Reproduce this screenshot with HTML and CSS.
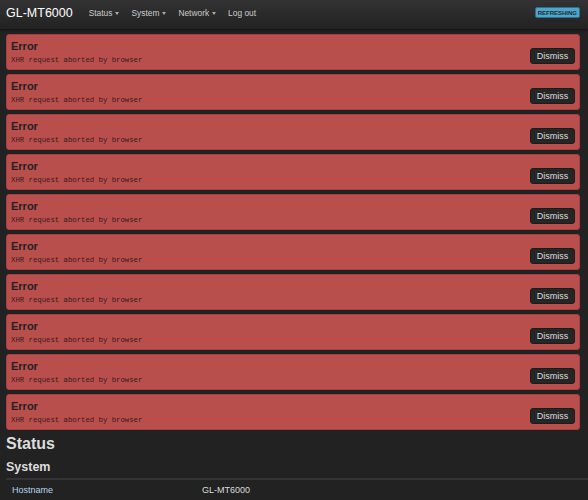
FILE: index.html
```html
<!DOCTYPE html>
<html lang="en">

<head>
    <meta charset="UTF-8">
    <meta name="viewport" content="width=device-width, initial-scale=1.0">
    <title>GL-MT6000 - Status - LuCI</title>
    <link rel="stylesheet" href="styles.css">
</head>

<body>
    <header class="navbar">
        <a class="brand" href="#">GL-MT6000</a>
        <ul class="nav">
            <li><a class="menu" href="#">Status</a></li>
            <li><a class="menu" href="#">System</a></li>
            <li><a class="menu" href="#">Network</a></li>
            <li><a href="#">Log out</a></li>
        </ul>
        <span class="label-refresh">REFRESHING</span>
    </header>

    <div class="main">
        <div class="alerts">
            <div class="alert-error">
                <div class="alert-text">
                    <h4>Error</h4>
                    <pre>XHR request aborted by browser</pre>
                </div>
                <button class="btn">Dismiss</button>
            </div>
            <div class="alert-error">
                <div class="alert-text">
                    <h4>Error</h4>
                    <pre>XHR request aborted by browser</pre>
                </div>
                <button class="btn">Dismiss</button>
            </div>
            <div class="alert-error">
                <div class="alert-text">
                    <h4>Error</h4>
                    <pre>XHR request aborted by browser</pre>
                </div>
                <button class="btn">Dismiss</button>
            </div>
            <div class="alert-error">
                <div class="alert-text">
                    <h4>Error</h4>
                    <pre>XHR request aborted by browser</pre>
                </div>
                <button class="btn">Dismiss</button>
            </div>
            <div class="alert-error">
                <div class="alert-text">
                    <h4>Error</h4>
                    <pre>XHR request aborted by browser</pre>
                </div>
                <button class="btn">Dismiss</button>
            </div>
            <div class="alert-error">
                <div class="alert-text">
                    <h4>Error</h4>
                    <pre>XHR request aborted by browser</pre>
                </div>
                <button class="btn">Dismiss</button>
            </div>
            <div class="alert-error">
                <div class="alert-text">
                    <h4>Error</h4>
                    <pre>XHR request aborted by browser</pre>
                </div>
                <button class="btn">Dismiss</button>
            </div>
            <div class="alert-error">
                <div class="alert-text">
                    <h4>Error</h4>
                    <pre>XHR request aborted by browser</pre>
                </div>
                <button class="btn">Dismiss</button>
            </div>
            <div class="alert-error">
                <div class="alert-text">
                    <h4>Error</h4>
                    <pre>XHR request aborted by browser</pre>
                </div>
                <button class="btn">Dismiss</button>
            </div>
            <div class="alert-error">
                <div class="alert-text">
                    <h4>Error</h4>
                    <pre>XHR request aborted by browser</pre>
                </div>
                <button class="btn">Dismiss</button>
            </div>
        </div>

        <h2 class="page-title">Status</h2>
        <div class="cbi-section">
            <h3>System</h3>
            <table class="table">
                <tr>
                    <td class="td-left">Hostname</td>
                    <td>GL-MT6000</td>
                </tr>
            </table>
        </div>
    </div>
</body>

</html>
```

FILE: styles.css
```css
body {
    margin: 0;
    background-color: #222;
    color: #ddd;
    font-family: "Liberation Sans", Arial, sans-serif;
    font-size: 9px;
}

/* top bar */
.navbar {
    display: flex;
    align-items: center;
    height: 25px;
    padding: 0 8px 4px 6px;
    background: linear-gradient(#333, #222);
    box-shadow: 0 1px 2px rgba(0, 0, 0, 0.5);
}

.brand {
    color: #fff;
    font-size: 12.5px;
    text-decoration: none;
    margin-right: 10px;
}

.nav {
    display: flex;
    list-style: none;
    margin: 0;
    padding: 0;
    flex: 1;
}

.nav a {
    display: block;
    color: #ccc;
    text-decoration: none;
    padding: 0 6px;
    font-size: 8.4px;
}

.nav a.menu::after {
    content: "";
    display: inline-block;
    margin-left: 3px;
    vertical-align: middle;
    border-top: 3px solid #aaa;
    border-left: 2.5px solid transparent;
    border-right: 2.5px solid transparent;
}

.label-refresh {
    background-color: #4fa6cb;
    color: #1c2b33;
    font-size: 6px;
    font-weight: bold;
    padding: 1.5px 2px;
    border-radius: 2px;
    border: 1px solid #2e6f8c;
}

.main {
    padding: 5px 8px 0 6px;
}

/* error boxes */
.alerts {
    display: flex;
    flex-direction: column;
    gap: 4px;
}

.alert-error {
    display: flex;
    align-items: flex-end;
    justify-content: space-between;
    height: 36px;
    box-sizing: border-box;
    padding: 0 4px 5px 4px;
    background-color: #b94f4d;
    border: 1px solid #a3403e;
    border-radius: 3px;
    color: #222;
}

.alert-text {
    align-self: flex-start;
    padding-top: 5px;
}

.alert-error h4 {
    margin: 0;
    font-size: 11px;
    line-height: 13px;
}

.alert-error pre {
    margin: 3px 0 0;
    font-family: "Liberation Mono", "Courier New", monospace;
    font-size: 7.3px;
    color: #3a1a19;
}

.btn {
    background-color: #262626;
    color: #ddd;
    border: 1px solid #1c1c1c;
    border-radius: 3px;
    font-family: "Liberation Sans", Arial, sans-serif;
    font-size: 9px;
    height: 16px;
    width: 45px;
    padding: 0;
}

/* status page */
.page-title {
    margin: 5px 0 0;
    font-size: 16px;
    color: #ddd;
}

.cbi-section h3 {
    margin: 7px 0 4px;
    font-size: 12.5px;
    color: #ddd;
    padding-bottom: 4px;
    border-bottom: 2px solid #333;
    margin-right: -8px;
}

.table {
    width: 100%;
    border-collapse: collapse;
}

.table td {
    padding: 1px 0 0 6px;
    font-size: 9px;
    color: #ddd;
}

.td-left {
    width: 184px;
    color: #b8d4ee !important;
}
```
